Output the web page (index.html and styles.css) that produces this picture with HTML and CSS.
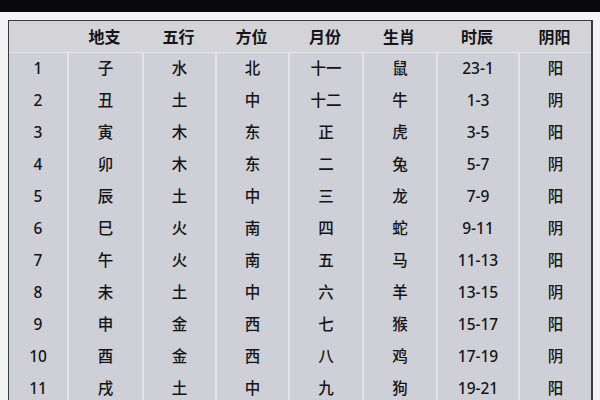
FILE: index.html
```html
<!DOCTYPE html>
<html lang="zh">
<head>
<meta charset="utf-8">
<link rel="stylesheet" href="styles.css">
</head>
<body>
<div class="topband"></div>
<div class="wrap">
  <div class="table">
    <div class="row head">
      <div class="c"></div><div class="c">地支</div><div class="c">五行</div><div class="c">方位</div><div class="c">月份</div><div class="c">生肖</div><div class="c">时辰</div><div class="c">阴阳</div>
    </div>
    <div class="sep"></div>
    <div class="body">
      <div class="row"><div class="c">1</div><div class="c">子</div><div class="c">水</div><div class="c">北</div><div class="c">十一</div><div class="c">鼠</div><div class="c">23-1</div><div class="c">阳</div></div>
      <div class="row"><div class="c">2</div><div class="c">丑</div><div class="c">土</div><div class="c">中</div><div class="c">十二</div><div class="c">牛</div><div class="c">1-3</div><div class="c">阴</div></div>
      <div class="row"><div class="c">3</div><div class="c">寅</div><div class="c">木</div><div class="c">东</div><div class="c">正</div><div class="c">虎</div><div class="c">3-5</div><div class="c">阳</div></div>
      <div class="row"><div class="c">4</div><div class="c">卯</div><div class="c">木</div><div class="c">东</div><div class="c">二</div><div class="c">兔</div><div class="c">5-7</div><div class="c">阴</div></div>
      <div class="row"><div class="c">5</div><div class="c">辰</div><div class="c">土</div><div class="c">中</div><div class="c">三</div><div class="c">龙</div><div class="c">7-9</div><div class="c">阳</div></div>
      <div class="row"><div class="c">6</div><div class="c">巳</div><div class="c">火</div><div class="c">南</div><div class="c">四</div><div class="c">蛇</div><div class="c">9-11</div><div class="c">阴</div></div>
      <div class="row"><div class="c">7</div><div class="c">午</div><div class="c">火</div><div class="c">南</div><div class="c">五</div><div class="c">马</div><div class="c">11-13</div><div class="c">阳</div></div>
      <div class="row"><div class="c">8</div><div class="c">未</div><div class="c">土</div><div class="c">中</div><div class="c">六</div><div class="c">羊</div><div class="c">13-15</div><div class="c">阴</div></div>
      <div class="row"><div class="c">9</div><div class="c">申</div><div class="c">金</div><div class="c">西</div><div class="c">七</div><div class="c">猴</div><div class="c">15-17</div><div class="c">阳</div></div>
      <div class="row"><div class="c">10</div><div class="c">酉</div><div class="c">金</div><div class="c">西</div><div class="c">八</div><div class="c">鸡</div><div class="c">17-19</div><div class="c">阴</div></div>
      <div class="row"><div class="c">11</div><div class="c">戌</div><div class="c">土</div><div class="c">中</div><div class="c">九</div><div class="c">狗</div><div class="c">19-21</div><div class="c">阳</div></div>
    </div>
  </div>
</div>
</body>
</html>
```

FILE: styles.css
```css
html, body {
  margin: 0;
  padding: 0;
  width: 600px;
  height: 400px;
  overflow: hidden;
  background: #f3f3f6;
  font-family: "Noto Sans", "Noto Sans CJK SC", sans-serif;
  color: #141416;
}
.topband {
  height: 12px;
  background: #09080f;
}
.wrap {
  padding: 8px 7px 0 8px;
}
.table {
  border-top: 1px solid #3a3a3e;
  border-left: 1px solid #3a3a3e;
  border-right: 2px solid #3a3a3e;
  background: #cfcfd7;
}
.row {
  display: grid;
  grid-template-columns: 58px 75px 73px 73px 74px 74px 82px 73px;
  height: 32px;
}
.c {
  display: flex;
  align-items: center;
  justify-content: center;
  font-size: 15.5px;
  font-weight: 500;
  line-height: 1;
}
.head {
  background: #d3d3d8;
  height: 31px;
}
.head .c {
  font-size: 16px;
  font-weight: 700;
  color: #141416;
}
.sep {
  height: 1px;
  background: #e6e6ea;
}
.body .c + .c {
  border-left: 2px solid #e3e3e9;
}
```
